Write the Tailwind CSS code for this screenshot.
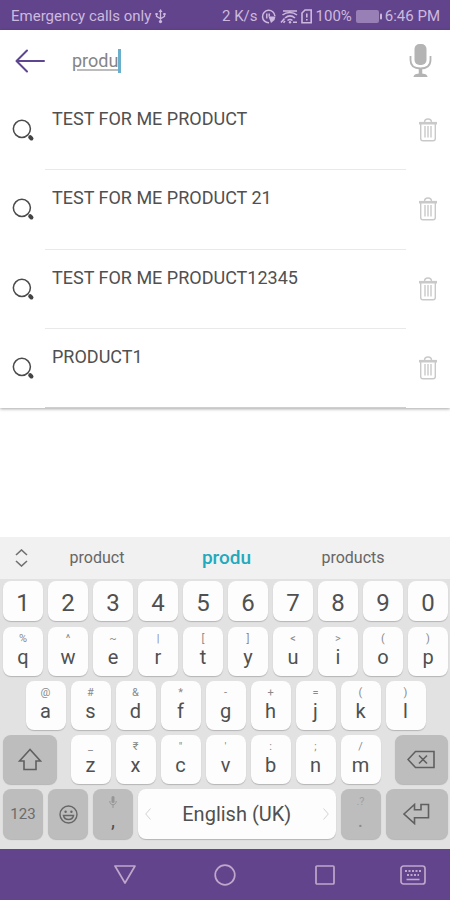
<!DOCTYPE html>
<html lang="en">
<head>
<meta charset="utf-8">
<meta name="viewport" content="width=device-width, initial-scale=1">
<title>Product search</title>
<script src="https://cdn.jsdelivr.net/npm/@tailwindcss/browser@4"></script>
</head>
<body class="flex min-h-screen flex-col bg-white font-[Roboto,'Liberation_Sans',sans-serif] text-[#505050]">

<svg class="hidden" aria-hidden="true">
  <symbol id="search" viewBox="0 0 24 24">
    <circle cx="10.3" cy="10.3" r="8.9" fill="none" stroke="#4b4b4b" stroke-width="1.6"/>
    <path d="M19 19l1.300 1.300" fill="none" stroke="#444" stroke-width="4.200" stroke-linecap="round"/>
  </symbol>
  <symbol id="trash" viewBox="0 0 20 24">
    <g fill="none" stroke="#c9c9c9" stroke-width="1.4">
      <path d="M6.500 4.500C6.500 2 8 1 10 1s3.500 1 3.500 3.500"/>
      <path d="M1 5.200h18" stroke-width="2.600"/>
      <path d="M2.700 6v14.500c0 1.500.8 2.300 2.300 2.300h10c1.500 0 2.300-.8 2.300-2.300V6"/>
      <path d="M7 8v11.500M10 8v11.500M13 8v11.500"/>
    </g>
  </symbol>
</svg>

<div class="flex h-[30px] items-center justify-between bg-[#62448c] pr-[10px] pl-[11px] pt-[2px] text-[15px] text-[#cdb9de]">
  <div class="flex items-center gap-1">
    <span>Emergency calls only</span>
    <svg class="h-[15px] w-[11px]" viewBox="0 0 11 15" fill="none" stroke="currentColor" stroke-width="1.300" aria-hidden="true">
      <path d="M5.500 2v10M1.500 5v2.300l4 2.500 4-2.500V5"/><path d="M5.500 0L3.500 3h4z" fill="currentColor" stroke="none"/><circle cx="5.500" cy="12.600" r="1.600" fill="currentColor" stroke="none"/><path d="M.4 4h2.300v2H.4zM8.300 4h2.300v2H8.300z" fill="currentColor" stroke="none"/>
    </svg>
  </div>
  <div class="flex items-center gap-[3px]">
    <span>2 K/s</span>
    <svg class="h-[15px] w-[16px]" viewBox="0 0 16 15" fill="none" stroke="currentColor" stroke-width="1.500" aria-hidden="true">
      <path d="M8 13.700A6.200 6.200 0 1 1 13.900 7"/><path d="M5.800 4.500v5M8.200 4.500v3"/><path d="M7.500 7.500h7l-1 3.500-3.500 3z" fill="currentColor" stroke="none"/>
    </svg>
    <svg class="h-[15px] w-[18px]" viewBox="0 0 18 15" fill="none" stroke="currentColor" stroke-width="1.600" aria-hidden="true">
      <path d="M3 2h14M2.500 6c4-3.300 10.500-3.300 14.500 0M5 9c3-2.500 7-2.500 10 0M7.500 11.500c1.500-1.200 3.500-1.200 5 0"/><circle cx="10" cy="13.300" r="1.200" fill="currentColor" stroke="none"/><path d="M1 13.500l3.500-4M3.500 13.700l1.500-1.700M13 13.200h4"/>
    </svg>
    <svg class="h-[15px] w-[12px]" viewBox="0 0 12 15" fill="none" stroke="currentColor" stroke-width="1.600" aria-hidden="true">
      <path d="M4 1h6.200v12.800H1V4z"/><path d="M5.800 4.500v4M5.800 10v1.600"/>
    </svg>
    <span>100%</span>
    <svg class="ml-[1px] h-[13px] w-[26px]" viewBox="0 0 26 13" fill="currentColor" aria-hidden="true">
      <rect x="0" y="0" width="23" height="13" rx="2" opacity=".5"/><rect x="24" y="3.500" width="2" height="6" rx="1"/>
    </svg>
    <span>6:46 PM</span>
  </div>
</div>

<main class="bg-white shadow-[0_1px_3px_rgba(0,0,0,0.35)]">
  <form class="flex h-[61px] items-center pr-[18px] pl-[15px]">
    <button type="button" aria-label="Back">
      <svg class="h-[24px] w-[31px]" viewBox="0 0 31 24" fill="none" stroke="#5d4590" stroke-width="2" stroke-linecap="round" stroke-linejoin="round"><path d="M29 12H1.800M12 1.500L1.500 12 12 22.500"/></svg>
    </button>
    <label class="ml-[26px] flex flex-1 items-center">
      <input type="text" aria-label="Search products" value="produ" class="field-sizing-content text-[18px] text-[#858585] underline decoration-[#bcbcbc] decoration-2 underline-offset-2 outline-none">
      <span class="h-[24px] w-[3px] bg-[#69aecb]" aria-hidden="true"></span>
    </label>
    <button type="button" aria-label="Voice search">
      <svg class="h-[34px] w-[23px]" viewBox="0 0 23 34" fill="none" stroke="#b4b4b4" aria-hidden="true">
        <rect x="5.500" y="0" width="12" height="21" rx="5" fill="#b4b4b4" stroke="none"/>
        <path d="M1.500 12v4c0 6 4 8.500 10 8.500s10-2.500 10-8.500v-4" stroke-width="1.800"/>
        <path d="M11.500 25v6" stroke-width="3.500"/><path d="M4.500 33c0-2.500 3-3.500 7-3.500s7 1 7 3.500z" fill="#b4b4b4" stroke="none"/>
      </svg>
    </button>
  </form>
  <ul>
    <li class="flex h-[79px] pl-3">
      <svg class="mt-[28px] h-[23px] w-[23px] shrink-0" aria-hidden="true"><use href="#search"/></svg>
      <a href="#" class="ml-[10px] flex-1 border-b border-[#e9e9e9] pt-[17px] pl-[7px] text-[18px] leading-[22px]">TEST FOR ME PRODUCT</a>
      <button type="button" aria-label="Remove" class="flex w-[44px] justify-center pt-[27px]"><svg class="h-[24px] w-[20px]"><use href="#trash"/></svg></button>
    </li>
    <li class="flex h-[80px] pl-3">
      <svg class="mt-[28px] h-[23px] w-[23px] shrink-0" aria-hidden="true"><use href="#search"/></svg>
      <a href="#" class="ml-[10px] flex-1 border-b border-[#e9e9e9] pt-[17px] pl-[7px] text-[18px] leading-[22px]">TEST FOR ME PRODUCT 21</a>
      <button type="button" aria-label="Remove" class="flex w-[44px] justify-center pt-[27px]"><svg class="h-[24px] w-[20px]"><use href="#trash"/></svg></button>
    </li>
    <li class="flex h-[79px] pl-3">
      <svg class="mt-[28px] h-[23px] w-[23px] shrink-0" aria-hidden="true"><use href="#search"/></svg>
      <a href="#" class="ml-[10px] flex-1 border-b border-[#e9e9e9] pt-[17px] pl-[7px] text-[18px] leading-[22px]">TEST FOR ME PRODUCT12345</a>
      <button type="button" aria-label="Remove" class="flex w-[44px] justify-center pt-[27px]"><svg class="h-[24px] w-[20px]"><use href="#trash"/></svg></button>
    </li>
    <li class="flex h-[79px] pl-3">
      <svg class="mt-[28px] h-[23px] w-[23px] shrink-0" aria-hidden="true"><use href="#search"/></svg>
      <a href="#" class="ml-[10px] flex-1 border-b border-[#cfcfcf] pt-[17px] pl-[7px] text-[18px] leading-[22px]">PRODUCT1</a>
      <button type="button" aria-label="Remove" class="flex w-[44px] justify-center pt-[27px]"><svg class="h-[24px] w-[20px]"><use href="#trash"/></svg></button>
    </li>
  </ul>
</main>

<div class="flex-1"></div>

<section aria-label="Keyboard" class="bg-[#e2e2e2]">
  <div class="flex h-[42px] items-center bg-[#f1f1f1] pr-[33px] text-[16px] text-[#666]">
    <button type="button" aria-label="Expand suggestions" class="flex w-[33px] justify-end pr-[5px]">
      <svg class="h-[18px] w-[13px]" viewBox="0 0 13 18" fill="none" stroke="#707070" stroke-width="1.600"><path d="M1 6l5.500-5L12 6M1 12l5.500 5L12 12"/></svg>
    </button>
    <div class="grid flex-1 grid-cols-3">
      <button type="button">product</button>
      <button type="button" class="pl-[3px] text-[19px] leading-6 font-medium text-[#22a9bd]">produ</button>
      <button type="button">products</button>
    </div>
  </div>

  <div class="grid gap-[5px] pt-[2px] pr-[2px] pb-[10px] pl-[3px] text-[20px]
    [&_button]:rounded-lg [&_button]:shadow-[0_1px_1px_rgba(0,0,0,0.2)]">
    <div class="grid h-[41px] grid-cols-10 gap-[5px] pb-[1px] text-[24px] *:bg-[#fdfdfd] *:pt-[3px]">
      <button type="button">1</button><button type="button">2</button><button type="button">3</button><button type="button">4</button><button type="button">5</button><button type="button">6</button><button type="button">7</button><button type="button">8</button><button type="button">9</button><button type="button">0</button>
    </div>
    <div class="grid h-[49px] grid-cols-10 gap-[5px] *:flex *:flex-col *:items-center *:bg-[#fdfdfd] *:pt-[5px] *:leading-6 [&_small]:h-[13px] [&_small]:text-[11px] [&_small]:leading-[14px] [&_small]:text-[#8a8a8a]">
      <button type="button"><small>%</small>q</button><button type="button"><small>^</small>w</button><button type="button"><small>~</small>e</button><button type="button"><small>|</small>r</button><button type="button"><small>[</small>t</button><button type="button"><small>]</small>y</button><button type="button"><small>&lt;</small>u</button><button type="button"><small>&gt;</small>i</button><button type="button"><small>(</small>o</button><button type="button"><small>)</small>p</button>
    </div>
    <div class="grid h-[49px] grid-cols-20 gap-[5px] *:col-span-2 *:flex *:flex-col *:items-center *:bg-[#fdfdfd] *:pt-[5px] *:leading-6 [&_small]:h-[13px] [&_small]:text-[11px] [&_small]:leading-[14px] [&_small]:text-[#8a8a8a]">
      <span class="invisible col-span-1!"></span>
      <button type="button"><small>@</small>a</button><button type="button"><small>#</small>s</button><button type="button"><small>&amp;</small>d</button><button type="button"><small>*</small>f</button><button type="button"><small>-</small>g</button><button type="button"><small>+</small>h</button><button type="button"><small>=</small>j</button><button type="button"><small>(</small>k</button><button type="button"><small>)</small>l</button>
    </div>
    <div class="grid h-[49px] grid-cols-20 gap-[5px]">
      <button type="button" aria-label="Shift" class="col-span-3 mr-[9px] flex items-center justify-center bg-[#bdbdbd]">
        <svg class="h-[23px] w-[24px]" viewBox="0 0 24 23" fill="none" stroke="#606060" stroke-width="1.600"><path d="M12 1.500L1.500 13H6v8.500h12V13h4.500z"/></svg>
      </button>
      <div class="col-span-14 grid grid-cols-7 gap-[5px] *:flex *:flex-col *:items-center *:bg-[#fdfdfd] *:pt-[5px] *:leading-6 [&_small]:h-[13px] [&_small]:text-[11px] [&_small]:leading-[14px] [&_small]:text-[#8a8a8a]">
        <button type="button"><small>_</small>z</button><button type="button"><small>₹</small>x</button><button type="button"><small>"</small>c</button><button type="button"><small>'</small>v</button><button type="button"><small>:</small>b</button><button type="button"><small>;</small>n</button><button type="button"><small>/</small>m</button>
      </div>
      <button type="button" aria-label="Backspace" class="col-span-3 ml-[9px] flex items-center justify-center bg-[#bdbdbd]">
        <svg class="h-[19px] w-[28px]" viewBox="0 0 28 19" fill="none" stroke="#606060" stroke-width="1.600"><path d="M8.500 1.500H27v16H8.500L1 9.500zM12 5.500l8 8M20 5.500l-8 8"/></svg>
      </button>
    </div>
    <div class="grid h-[50px] grid-cols-20 gap-[5px]">
      <button type="button" class="col-span-2 bg-[#bdbdbd] text-[15px] text-[#6c6c6c]">123</button>
      <button type="button" aria-label="Emoji" class="col-span-2 flex items-center justify-center bg-[#bdbdbd]">
        <svg class="h-[19px] w-[19px]" viewBox="0 0 19 19" fill="none" stroke="#666" stroke-width="1.400"><circle cx="9.500" cy="9.500" r="8.500"/><path d="M4.500 10.500c1 5.300 9 5.300 10 0z"/><circle cx="6.600" cy="6.800" r="1.200" fill="#666" stroke="none"/><circle cx="12.400" cy="6.800" r="1.200" fill="#666" stroke="none"/></svg>
      </button>
      <button type="button" class="col-span-2 flex flex-col items-center bg-[#bdbdbd] pt-[7px] leading-6">
        <svg class="h-[12px] w-[8px]" viewBox="0 0 8 12" fill="none" stroke="#969696" aria-hidden="true"><rect x="2.500" y="0" width="3" height="7" rx="1.500" fill="#969696" stroke="none"/><path d="M.8 5c0 5 6.400 5 6.400 0M4 9v3"/></svg>
        ,
      </button>
      <button type="button" class="col-span-9 flex items-center justify-between bg-[#fdfdfd] px-[7px]">
        <svg class="h-[12px] w-[6px]" viewBox="0 0 6 12" fill="none" stroke="#d2d2d2" aria-hidden="true"><path d="M5.500 .5L.7 6l4.800 5.500"/></svg>
        <span>English (UK)</span>
        <svg class="h-[12px] w-[6px]" viewBox="0 0 6 12" fill="none" stroke="#d2d2d2" aria-hidden="true"><path d="M.5 .5L5.300 6 .5 11.500"/></svg>
      </button>
      <button type="button" class="col-span-2 flex flex-col items-center bg-[#bdbdbd] pt-[7px] leading-6 text-[#8c8c8c]"><small class="h-[12px] text-[11px] leading-[12px] text-[#a0a0a0]">.?</small>.</button>
      <button type="button" aria-label="Enter" class="col-span-3 flex items-center justify-center bg-[#bdbdbd]">
        <svg class="h-[22px] w-[27px]" viewBox="0 0 27 22" fill="none" stroke="#606060" stroke-width="1.600"><path d="M1 11L11.500 1.500v5.300H18V1.500h7.500v13.200h-14v5.800z"/></svg>
      </button>
    </div>
  </div>
</section>

<nav aria-label="System" class="flex h-[51px] items-center bg-[#62448c] text-[#c0a6cb]">
  <div class="grid flex-1 grid-cols-[1fr_100px_100px_100px_1fr] items-center justify-items-center">
    <button type="button" aria-label="Hide keyboard" class="col-start-2"><svg class="h-[21px] w-[22px]" viewBox="0 0 22 21" fill="none" stroke="currentColor" stroke-width="1.700" stroke-linejoin="round"><path d="M1 2h20L11 19z"/></svg></button>
    <button type="button" aria-label="Home"><svg class="h-[22px] w-[22px]" viewBox="0 0 22 22" fill="none" stroke="currentColor" stroke-width="1.700"><circle cx="11" cy="11" r="9.800"/></svg></button>
    <button type="button" aria-label="Recent apps"><svg class="h-[20px] w-[20px]" viewBox="0 0 20 20" fill="none" stroke="currentColor" stroke-width="1.700"><rect x="1" y="1" width="18" height="18" rx="1"/></svg></button>
    <button type="button" aria-label="Switch keyboard"><svg class="h-[20px] w-[26px]" viewBox="0 0 26 20" fill="none" stroke="currentColor" stroke-width="1.700"><rect x="1" y="1" width="24" height="18" rx="2.500"/><path d="M5 6h16M7 10h12" stroke-width="2" stroke-dasharray="2 1.500"/><path d="M6.500 14.500h13" stroke-width="1.600"/></svg></button>
  </div>
</nav>
</body>
</html>
